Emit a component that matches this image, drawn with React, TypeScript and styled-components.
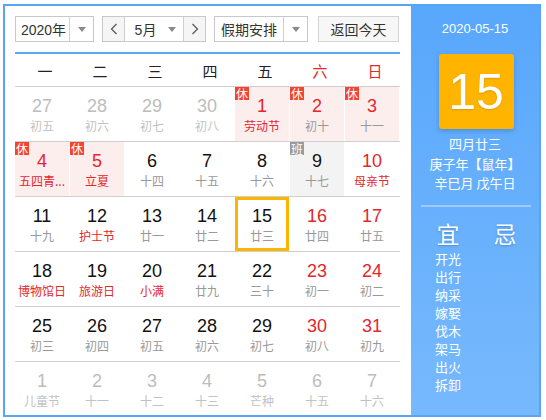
import styled, { createGlobalStyle } from 'styled-components'

const GlobalStyle = createGlobalStyle`
    body {
        margin: 0;
        background: #fff;
        font-family: "Liberation Sans", "Noto Sans CJK SC", sans-serif;
    }
`

type Day = {
    n: number
    lunar: string
    other?: boolean
    red?: boolean
    fest?: boolean
    badge?: 'rest' | 'work'
    today?: boolean
}

const weeks: Day[][] = [
    [
        { n: 27, lunar: '初五', other: true },
        { n: 28, lunar: '初六', other: true },
        { n: 29, lunar: '初七', other: true },
        { n: 30, lunar: '初八', other: true },
        { n: 1, lunar: '劳动节', red: true, fest: true, badge: 'rest' },
        { n: 2, lunar: '初十', red: true, badge: 'rest' },
        { n: 3, lunar: '十一', red: true, badge: 'rest' },
    ],
    [
        { n: 4, lunar: '五四青...', red: true, fest: true, badge: 'rest' },
        { n: 5, lunar: '立夏', red: true, fest: true, badge: 'rest' },
        { n: 6, lunar: '十四' },
        { n: 7, lunar: '十五' },
        { n: 8, lunar: '十六' },
        { n: 9, lunar: '十七', badge: 'work' },
        { n: 10, lunar: '母亲节', red: true, fest: true },
    ],
    [
        { n: 11, lunar: '十九' },
        { n: 12, lunar: '护士节', fest: true },
        { n: 13, lunar: '廿一' },
        { n: 14, lunar: '廿二' },
        { n: 15, lunar: '廿三', today: true },
        { n: 16, lunar: '廿四', red: true },
        { n: 17, lunar: '廿五', red: true },
    ],
    [
        { n: 18, lunar: '博物馆日', fest: true },
        { n: 19, lunar: '旅游日', fest: true },
        { n: 20, lunar: '小满', fest: true },
        { n: 21, lunar: '廿九' },
        { n: 22, lunar: '三十' },
        { n: 23, lunar: '初一', red: true },
        { n: 24, lunar: '初二', red: true },
    ],
    [
        { n: 25, lunar: '初三' },
        { n: 26, lunar: '初四' },
        { n: 27, lunar: '初五' },
        { n: 28, lunar: '初六' },
        { n: 29, lunar: '初七' },
        { n: 30, lunar: '初八', red: true },
        { n: 31, lunar: '初九', red: true },
    ],
    [
        { n: 1, lunar: '儿童节', other: true },
        { n: 2, lunar: '十一', other: true },
        { n: 3, lunar: '十二', other: true },
        { n: 4, lunar: '十三', other: true },
        { n: 5, lunar: '芒种', other: true },
        { n: 6, lunar: '十五', other: true },
        { n: 7, lunar: '十六', other: true },
    ],
]

const weekdays = ['一', '二', '三', '四', '五', '六', '日']
const yiList = ['开光', '出行', '纳采', '嫁娶', '伐木', '架马', '出火', '拆卸']

const RED = '#e5262c'

const Frame = styled.div`
    display: flex;
    box-sizing: border-box;
    width: 538px;
    height: 413px;
    margin: 4px 0 0 3px;
    border: 2px solid #57a6f6;
    overflow: hidden;
`

/* 왼쪽 달력 */
const Main = styled.div`
    width: 406px;
    padding: 10px 11px 0 10px;
    box-sizing: border-box;
    background: #fff;
`

const Toolbar = styled.div`
    display: flex;
    align-items: center;
    height: 26px;
    gap: 8px;
`

const SelectBox = styled.div<{ $w: number }>`
    display: flex;
    align-items: stretch;
    box-sizing: border-box;
    width: ${p => p.$w}px;
    height: 26px;
    border: 1px solid #c8c8c8;
    background: #fff;
    font-size: 14px;
    color: #333;
`

const SelectText = styled.span<{ $pad?: number }>`
    flex: 1;
    display: flex;
    align-items: center;
    justify-content: center;
    padding-left: ${p => p.$pad ?? 0}px;
    font-family: "Liberation Sans", "Noto Sans CJK SC", sans-serif;
`

const ArrowPart = styled.span<{ $line?: boolean }>`
    width: 23px;
    display: flex;
    align-items: center;
    justify-content: center;
    border-left: ${p => (p.$line ? '1px solid #d0d0d0' : 'none')};

    &::after {
        content: '';
        border-left: 4px solid transparent;
        border-right: 4px solid transparent;
        border-top: 5px solid #8a8a8a;
    }
`

const NavButton = styled.span<{ $side: 'l' | 'r' }>`
    width: 21px;
    display: flex;
    align-items: center;
    justify-content: center;
    background: #f5f5f5;
    border-${p => (p.$side === 'l' ? 'right' : 'left')}: 1px solid #d0d0d0;
`

const TodayButton = styled.button`
    box-sizing: border-box;
    width: 81px;
    height: 26px;
    margin-left: 2px;
    border: 1px solid #d4d4d4;
    background: #f7f7f7;
    font-size: 14px;
    color: #333;
    font-family: "Noto Sans CJK SC", sans-serif;
    padding: 0;
    cursor: pointer;
`

const BlueLine = styled.div`
    height: 2px;
    margin-top: 10px;
    background: #58a8f6;
`

const WeekHeader = styled.div`
    display: grid;
    grid-template-columns: repeat(7, 55px);
    height: 32px;
    border-bottom: 1px solid #cfcfcf;
`

const WeekName = styled.span<{ $red?: boolean }>`
    display: flex;
    align-items: center;
    justify-content: center;
    padding-left: 5px;
    font-size: 15px;
    color: ${p => (p.$red ? RED : '#222')};
    font-family: "Noto Sans CJK SC", sans-serif;
`

const WeekRow = styled.div<{ $last?: boolean }>`
    display: grid;
    grid-template-columns: repeat(7, 55px);
    height: 55px;
    box-sizing: border-box;
    border-bottom: ${p => (p.$last ? 'none' : '1px solid #cfcfcf')};
`

const Cell = styled.div<{ $bg: string; $today?: boolean }>`
    position: relative;
    display: flex;
    flex-direction: column;
    align-items: center;
    box-sizing: border-box;
    padding-top: 8px;
    border-right: 1px solid #fff;
    background: ${p => p.$bg};
    box-shadow: ${p => (p.$today ? 'inset 0 0 0 3px #ffb400' : 'none')};
`

const DayNum = styled.span<{ $color: string }>`
    font-size: 18px;
    line-height: 22px;
    color: ${p => p.$color};
    font-family: "Liberation Sans", Arial, sans-serif;
`

const Lunar = styled.span<{ $color: string }>`
    font-size: 12px;
    line-height: 18px;
    white-space: nowrap;
    color: ${p => p.$color};
    font-family: "Noto Sans CJK SC", sans-serif;
`

const Badge = styled.span<{ $work?: boolean }>`
    position: absolute;
    top: 0;
    left: 0;
    width: 14px;
    height: 13px;
    line-height: 13px;
    text-align: center;
    font-size: 12px;
    color: #fff;
    background: ${p => (p.$work ? '#9a9a9a' : '#f5432f')};
    font-family: "Noto Sans CJK SC", sans-serif;
`

/* 오른쪽 패널 */
const Side = styled.div`
    flex: 1;
    display: flex;
    flex-direction: column;
    align-items: center;
    padding-top: 13px;
    background: linear-gradient(#58a7fc, #77b9fd);
    color: #fff;
    font-family: "Noto Sans CJK SC", sans-serif;
`

const DateText = styled.div`
    font-size: 13px;
    line-height: 20px;
    font-family: "Liberation Sans", Arial, sans-serif;
`

const BigDay = styled.div`
    width: 75px;
    height: 75px;
    margin-top: 15px;
    margin-left: 2px;
    border-radius: 3px;
    background: #ffb400;
    box-shadow: 0 2px 4px rgba(40, 90, 160, 0.35);
    display: flex;
    align-items: center;
    justify-content: center;
    font-size: 50px;
    font-family: "Liberation Sans", Arial, sans-serif;
    text-shadow: 0 1px 2px rgba(0, 0, 0, 0.15);
`

const LunarInfo = styled.div`
    margin-top: 5px;
    font-size: 13px;
    line-height: 19.5px;
    text-align: center;
`

const Divider = styled.div`
    width: 110px;
    height: 2px;
    margin: 12px 0 0 2px;
    background: #9fcbfc;
`

const Columns = styled.div`
    display: grid;
    grid-template-columns: 57px 57px;
    margin: 11px 0 0 3px;
`

const ColHead = styled.div`
    font-size: 23px;
    line-height: 30px;
    text-align: center;
    text-shadow: 0 1px 2px rgba(30, 80, 150, 0.4);
`

const ColList = styled.ul`
    list-style: none;
    margin: 2px 0 0;
    padding: 0;
    text-align: center;
    font-size: 13px;
    line-height: 18.1px;
`

function Chevron({ dir }: { dir: 'l' | 'r' }) {
    return (
        <svg width="8" height="12" viewBox="0 0 8 12">
            <polyline
                points={dir === 'l' ? '6.5,1 1.5,6 6.5,11' : '1.5,1 6.5,6 1.5,11'}
                fill="none"
                stroke="#555"
                strokeWidth="1.2"
            />
        </svg>
    )
}

function cellBg(d: Day) {
    if (d.badge === 'rest') return '#fdeeee'
    if (d.badge === 'work') return '#f3f3f3'
    return '#fff'
}

function numColor(d: Day) {
    if (d.other) return '#bdbdbd'
    return d.red ? RED : '#111'
}

function lunarColor(d: Day) {
    if (d.other) return '#c2c2c2'
    return d.fest ? RED : '#999'
}

export default function App() {
    return (
        <>
            <GlobalStyle />
            <Frame>
                <Main>
                    <Toolbar>
                        <SelectBox $w={79}>
                            <SelectText $pad={2}>2020年</SelectText>
                            <ArrowPart $line />
                        </SelectBox>
                        <SelectBox $w={104}>
                            <NavButton $side="l"><Chevron dir="l" /></NavButton>
                            <SelectText $pad={6}>5月</SelectText>
                            <ArrowPart />
                            <NavButton $side="r"><Chevron dir="r" /></NavButton>
                        </SelectBox>
                        <SelectBox $w={94}>
                            <SelectText>假期安排</SelectText>
                            <ArrowPart $line />
                        </SelectBox>
                        <TodayButton>返回今天</TodayButton>
                    </Toolbar>
                    <BlueLine />
                    <WeekHeader>
                        {weekdays.map((w, i) => (
                            <WeekName key={w} $red={i >= 5}>{w}</WeekName>
                        ))}
                    </WeekHeader>
                    {weeks.map((week, wi) => (
                        <WeekRow key={wi} $last={wi === weeks.length - 1}>
                            {week.map((d, di) => (
                                <Cell key={di} $bg={cellBg(d)} $today={d.today}>
                                    {d.badge && (
                                        <Badge $work={d.badge === 'work'}>
                                            {d.badge === 'work' ? '班' : '休'}
                                        </Badge>
                                    )}
                                    <DayNum $color={numColor(d)}>{d.n}</DayNum>
                                    <Lunar $color={lunarColor(d)}>{d.lunar}</Lunar>
                                </Cell>
                            ))}
                        </WeekRow>
                    ))}
                </Main>
                <Side>
                    <DateText>2020-05-15</DateText>
                    <BigDay>15</BigDay>
                    <LunarInfo>
                        <div>四月廿三</div>
                        <div>庚子年【鼠年】</div>
                        <div>辛巳月 戊午日</div>
                    </LunarInfo>
                    <Divider />
                    <Columns>
                        <div>
                            <ColHead>宜</ColHead>
                            <ColList>
                                {yiList.map(t => <li key={t}>{t}</li>)}
                            </ColList>
                        </div>
                        <div>
                            <ColHead>忌</ColHead>
                        </div>
                    </Columns>
                </Side>
            </Frame>
        </>
    )
}
